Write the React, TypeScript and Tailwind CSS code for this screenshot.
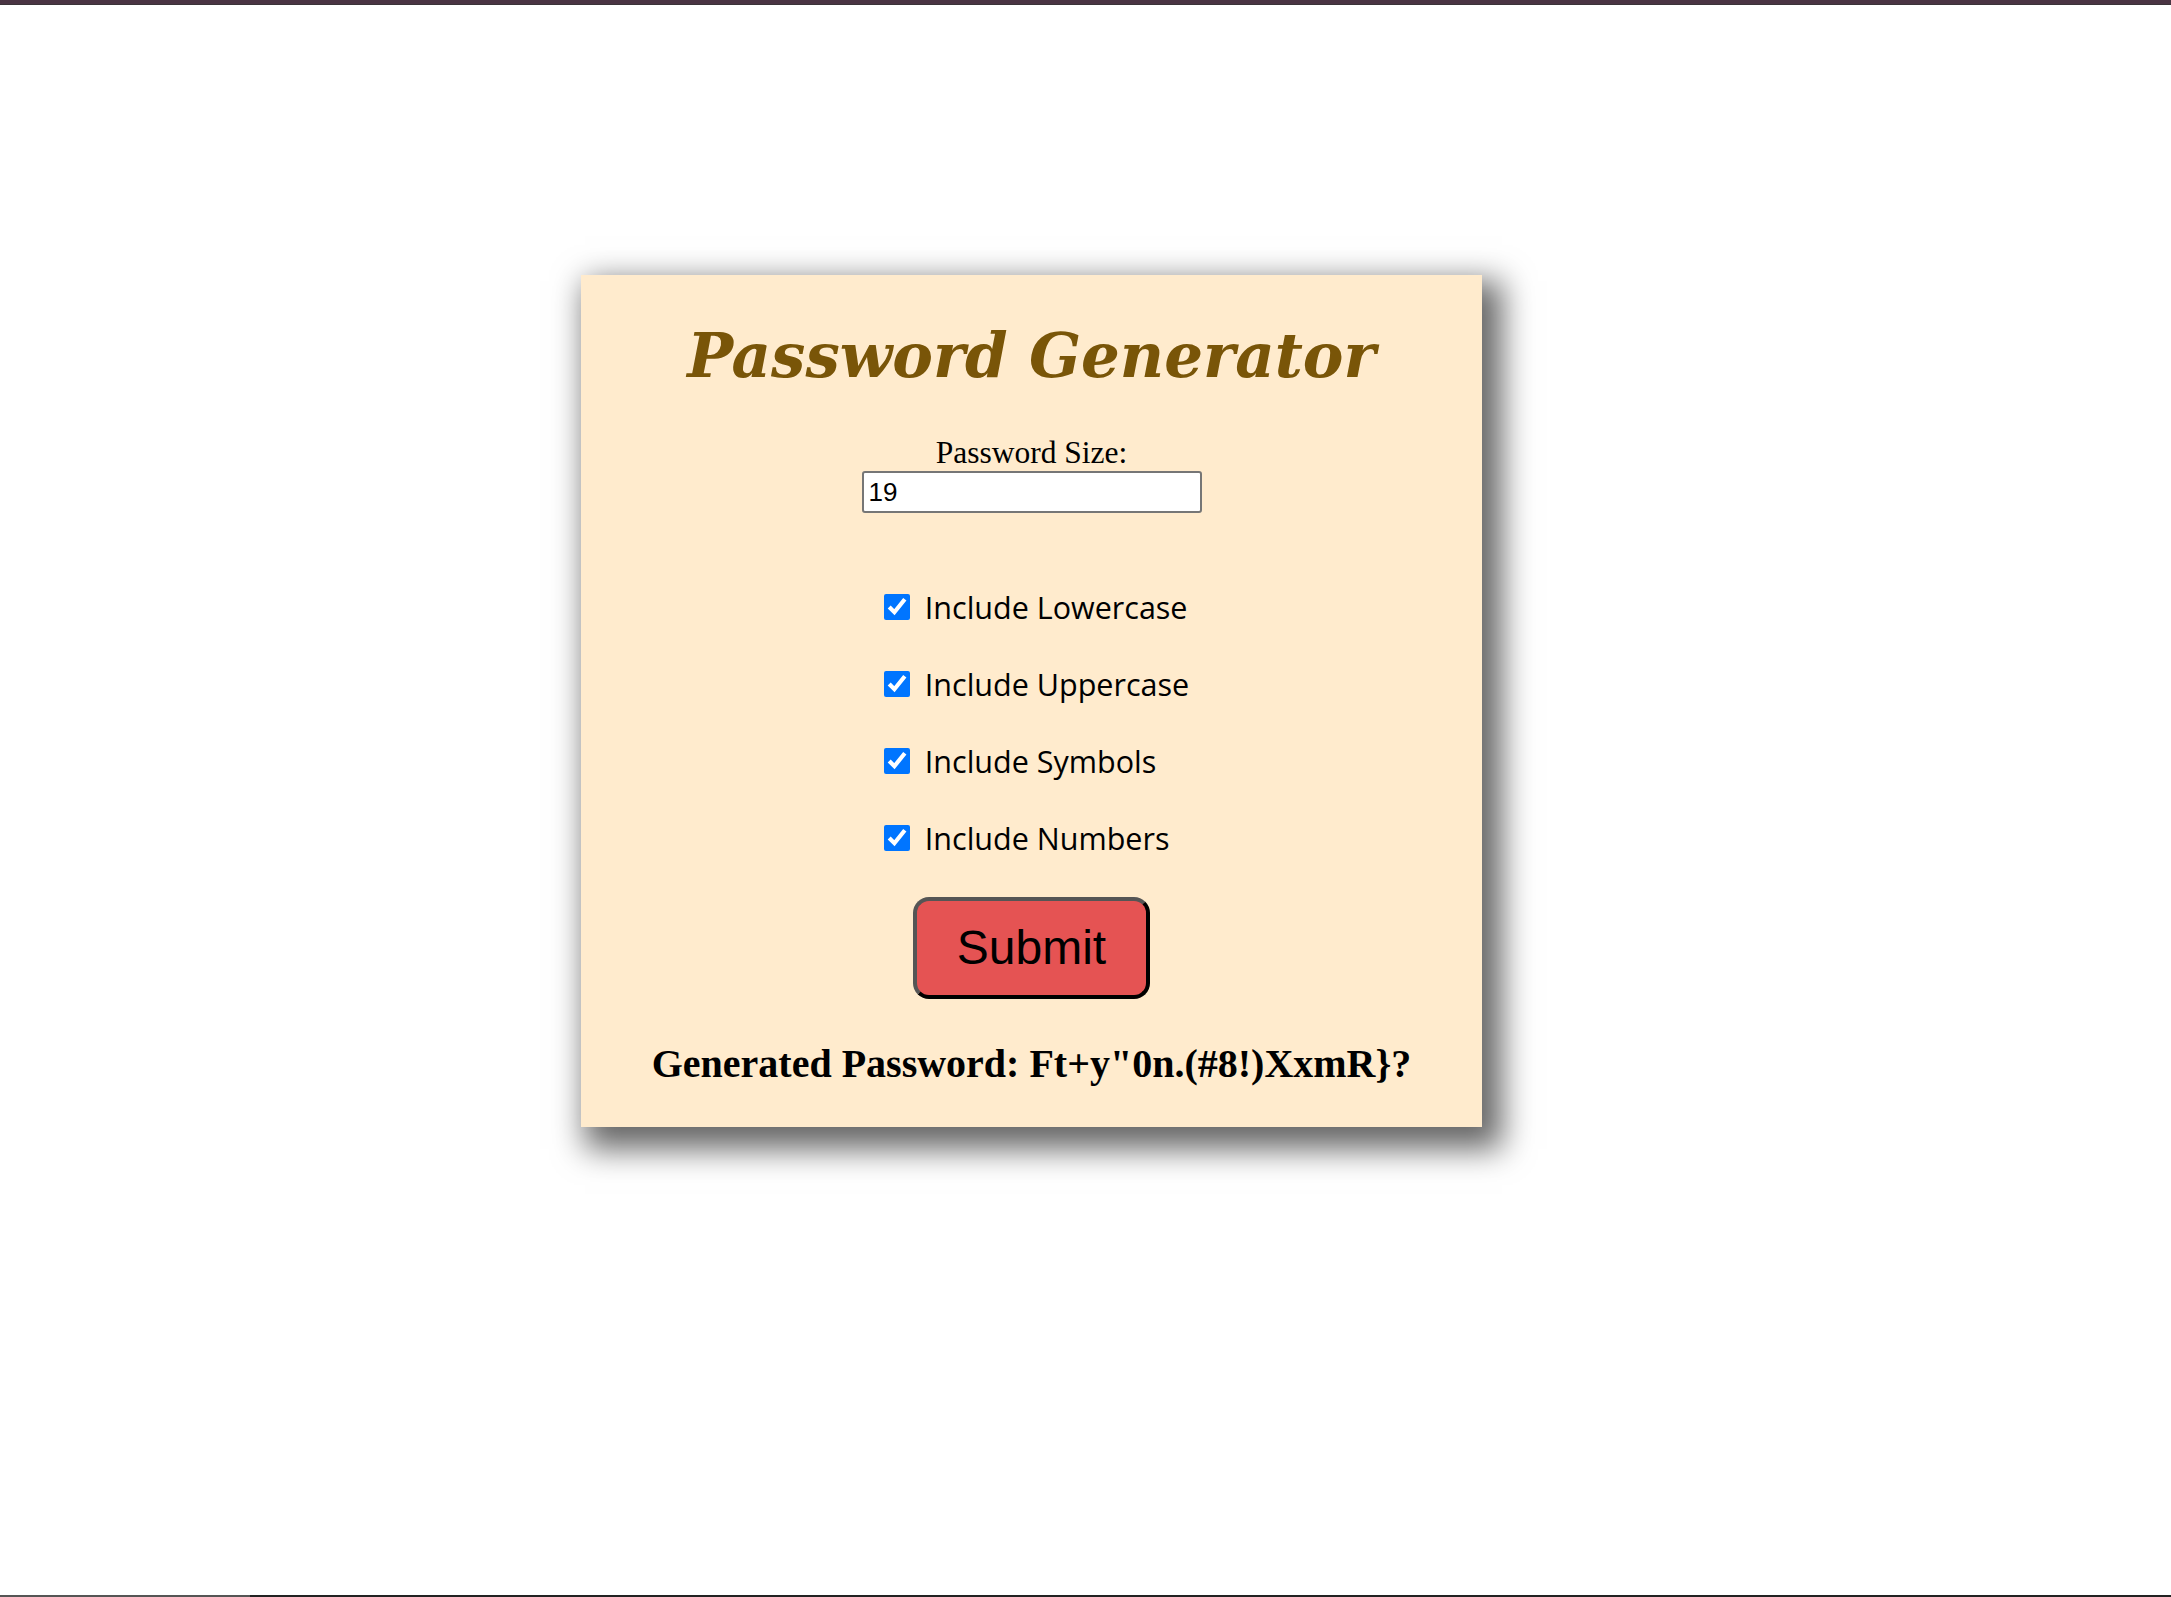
import { useState } from "react";

const options = [
  "Include Lowercase",
  "Include Uppercase",
  "Include Symbols",
  "Include Numbers",
];

export default function App() {
  const [size, setSize] = useState("19");
  const [checked, setChecked] = useState([true, true, true, true]);

  return (
    <div className="min-h-screen bg-white flex flex-col">
      {/* window top edge */}
      <div className="h-[4px] bg-[#4a3443]" />
      <div className="h-[1px] bg-[#3b3338]" />

      <div className="flex-1 pl-[581px] pt-[270px]">
        <div className="w-[901px] bg-[#ffebcd] shadow-[12px_14px_30px_8px_rgba(0,0,0,0.6)] flex flex-col items-center pt-[45px] pb-[40px]">
          <h1 className="font-['DejaVu_Serif',serif] italic font-bold text-[61px] leading-[72px] text-[#795508]">
            Password Generator
          </h1>

          <label className="mt-[43px] font-['Liberation_Serif',serif] text-[31.5px] leading-[36px] text-black">
            Password Size:
          </label>
          <input
            type="number"
            value={size}
            onChange={(e) => setSize(e.target.value)}
            className="mt-0 w-[340px] h-[42px] bg-white border-2 border-[#767676] rounded-[3px] px-[5px] font-['Liberation_Sans',sans-serif] text-[26px] text-black outline-none [appearance:textfield]"
          />

          <div className="mt-[81px] flex flex-col items-start gap-[51px] pl-[10px]">
            {options.map((label, i) => (
              <label key={label} className="flex items-center h-[26px] gap-[15px]">
                <input
                  type="checkbox"
                  checked={checked[i]}
                  onChange={() =>
                    setChecked((c) => c.map((v, j) => (j === i ? !v : v)))
                  }
                  className="m-0 w-[26px] h-[26px] accent-[#0075ff]"
                />
                <span className="font-['Open_Sans',sans-serif] text-[30.5px] leading-[40px] text-black">
                  {label}
                </span>
              </label>
            ))}
          </div>

          <button className="mt-[46px] w-[237px] h-[102px] flex items-center justify-center bg-[#e55353] border-4 border-t-[#555555] border-l-[#555555] border-b-black border-r-black rounded-[16px] font-['Liberation_Sans',sans-serif] text-[48px] text-black">
            Submit
          </button>

          <h2 className="mt-[42px] font-['Liberation_Serif',serif] font-bold text-[40px] leading-[46px] text-black">
            Generated Password: Ft+y"0n.(#8!)XxmR{"}"}?
          </h2>
        </div>
      </div>

      {/* window bottom edge */}
      <div className="h-[2px] flex">
        <div className="w-[250px] bg-[#555555]" />
        <div className="flex-1 bg-[#222222]" />
      </div>
    </div>
  );
}
